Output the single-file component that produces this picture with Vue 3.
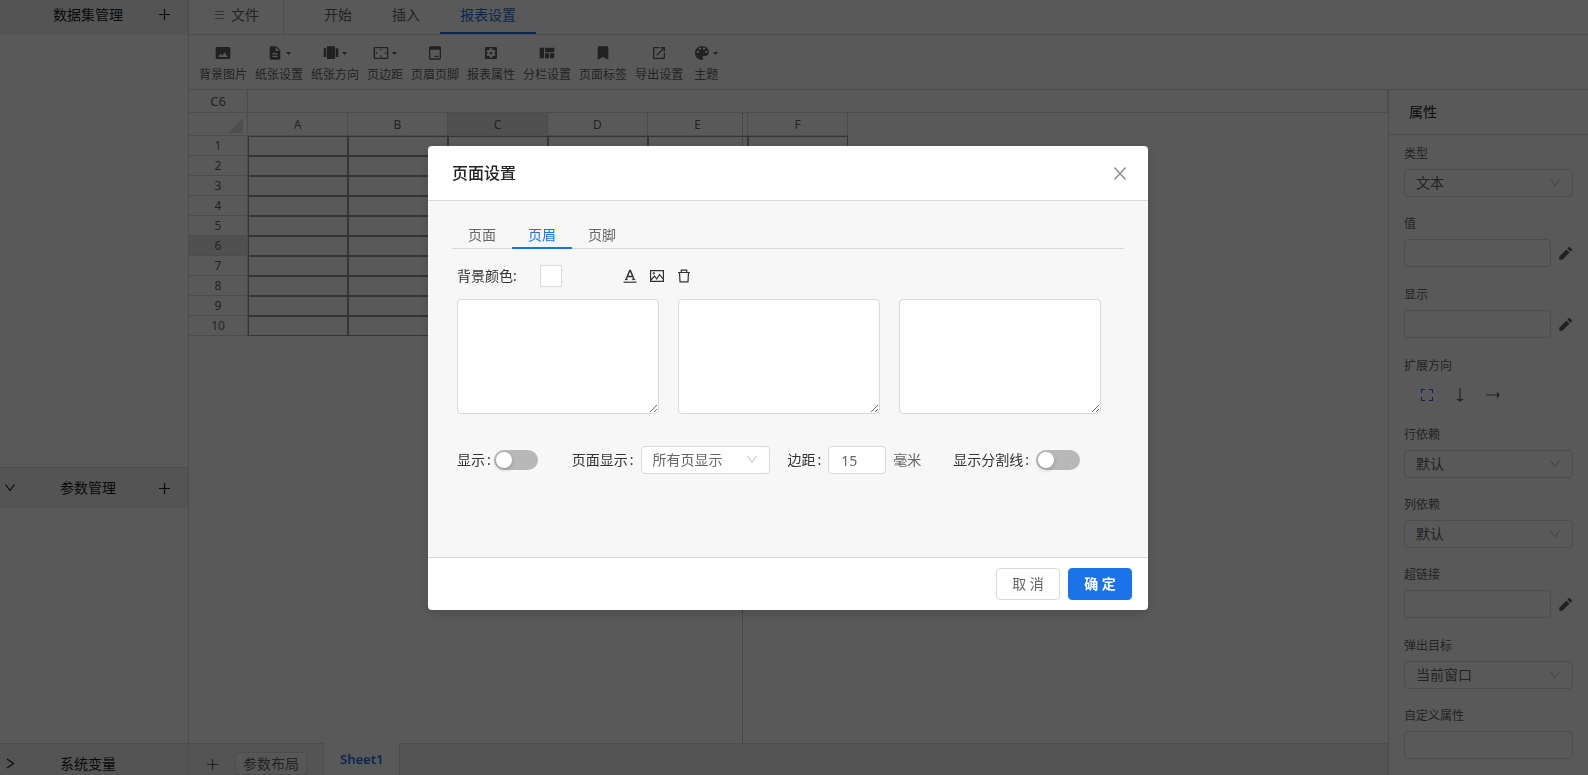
<script setup>
import { ref } from 'vue'

const menuTabs = ['开始', '插入', '报表设置']
const activeMenu = ref('报表设置')

const tools = [
  { label: '背景图片', icon: 'image' },
  { label: '纸张设置', icon: 'doc', caret: true },
  { label: '纸张方向', icon: 'carousel', caret: true },
  { label: '页边距', icon: 'margin', caret: true },
  { label: '页眉页脚', icon: 'header' },
  { label: '报表属性', icon: 'settings' },
  { label: '分栏设置', icon: 'quilt' },
  { label: '页面标签', icon: 'bookmark' },
  { label: '导出设置', icon: 'export' },
  { label: '主题', icon: 'palette', caret: true }
]

const icons = {
  image: 'M21 3H3C2 3 1 4 1 5v14c0 1.1.9 2 2 2h18c1 0 2-1 2-2V5c0-1-1-2-2-2zM5 18l3.5-5 2.5 3 3.5-5L19 18H5z',
  doc: 'M14 2H6c-1.1 0-2 .9-2 2v16c0 1.1.9 2 2 2h12c1.1 0 2-.9 2-2V8l-6-6zm2 16H8v-2h8v2zm0-4H8v-2h8v2zm-3-5V3.500L18.500 9H13z',
  carousel: 'M6 21h12V2H6v19zM1 18h4V5H1v13zM19 5v13h4V5h-4z',
  margin: 'M12 5.500L10 8h4l-2-2.500zM18 10v4l2.500-2L18 10zM6 10l-2.500 2L6 14v-4zm8 6h-4l2 2.500L14 16zm7-13H3c-1.100 0-2 .9-2 2v14c0 1.100.9 2 2 2h18c1.100 0 2-.9 2-2V5c0-1.100-.9-2-2-2zm0 16H3V5h18v14z',
  header: 'M19 2H5c-1.100 0-2 .9-2 2v16c0 1.100.9 2 2 2h14c1.100 0 2-.9 2-2V4c0-1.100-.9-2-2-2zm0 18H5V7h14v13zM11 16h6v2h-6z',
  settings: 'M12 10c-1.1 0-2 .9-2 2s.9 2 2 2 2-.9 2-2-.9-2-2-2zm7-7H5c-1.11 0-2 .9-2 2v14c0 1.1.89 2 2 2h14c1.11 0 2-.9 2-2V5c0-1.1-.89-2-2-2zm-1.75 9c0 .23-.02.46-.05.68l1.48 1.16c.13.11.17.3.08.45l-1.4 2.42c-.09.15-.27.21-.43.15l-1.74-.7c-.36.28-.76.51-1.18.69l-.26 1.85c-.03.17-.18.3-.35.3h-2.8c-.17 0-.32-.13-.35-.29l-.26-1.85c-.43-.18-.82-.41-1.18-.69l-1.74.7c-.16.06-.34 0-.43-.15l-1.4-2.42c-.09-.15-.05-.34.08-.45l1.48-1.16c-.03-.23-.05-.46-.05-.69 0-.23.02-.46.05-.68l-1.48-1.16c-.13-.11-.17-.3-.08-.45l1.4-2.42c.09-.15.27-.21.43-.15l1.74.7c.36-.28.76-.51 1.18-.69l.26-1.85c.03-.17.18-.3.35-.3h2.8c.17 0 .32.13.35.29l.26 1.85c.43.18.82.41 1.18.69l1.74-.7c.16-.06.34 0 .43.15l1.4 2.42c.09.15.05.34-.08.45l-1.48 1.16c.03.23.05.46.05.69z',
  quilt: 'M1 4h6.500v16H1zM9 4h14v7H9zM9 12.500h6.200V20H9zM16.700 12.500H23V20h-6.300z',
  bookmark: 'M18 2H6c-1.100 0-2 .9-2 2v18l8-4 8 4V4c0-1.100-.9-2-2-2z',
  export: 'M19 19H5V5h7V3H5c-1.110 0-2 .9-2 2v14c0 1.100.89 2 2 2h14c1.100 0 2-.9 2-2v-7h-2v7zM14 3v2h3.590l-9.830 9.830 1.410 1.410L19 6.410V10h2V3h-7z',
  palette: 'M12 1.500C6.200 1.500 1.500 6.200 1.500 12S6.200 22.500 12 22.500c1 0 1.750-.8 1.750-1.750 0-.450-.180-.860-.450-1.180-.270-.3-.440-.710-.440-1.150 0-.970.780-1.750 1.750-1.750h2.060c3.220 0 5.830-2.610 5.830-5.830C22.500 5.680 17.800 1.500 12 1.500zM5.600 12a1.750 1.750 0 1 1 0-3.500 1.750 1.750 0 0 1 0 3.500zm3.500-4.700a1.750 1.750 0 1 1 0-3.500 1.750 1.750 0 0 1 0 3.500zm5.800 0a1.750 1.750 0 1 1 0-3.500 1.750 1.750 0 0 1 0 3.500zm3.500 4.700a1.750 1.750 0 1 1 0-3.500 1.750 1.750 0 0 1 0 3.500z'
}

const columns = ['A', 'B', 'C', 'D', 'E', 'F']
const selected = { col: 'C', row: 6 }

const fields = [
  { id: 'type', label: '类型', kind: 'select', value: '文本' },
  { id: 'value', label: '值', kind: 'edit' },
  { id: 'display', label: '显示', kind: 'edit' },
  { id: 'expand', label: '扩展方向', kind: 'direction' },
  { id: 'rowdep', label: '行依赖', kind: 'select', value: '默认' },
  { id: 'coldep', label: '列依赖', kind: 'select', value: '默认' },
  { id: 'link', label: '超链接', kind: 'edit' },
  { id: 'target', label: '弹出目标', kind: 'select', value: '当前窗口' },
  { id: 'custom', label: '自定义属性', kind: 'text' }
]

const dialogTabs = ['页面', '页眉', '页脚']
const activeTab = ref('页眉')
const areas = ['左侧内容', '中间内容', '右侧内容']
const margin = ref('15')
const show = ref(false)
const divider = ref(false)
</script>

<template>
  <div class="app">
    <aside class="sidebar">
      <header class="group first">
        <span class="slot"></span>
        <span class="group-title">数据集管理</span>
        <button class="icon-btn add" aria-label="添加数据集">
          <svg width="13" height="13" viewBox="0 0 13 13"><path d="M6.500 1v11M1 6.500h11" /></svg>
        </button>
      </header>
      <div class="group-body grow"></div>
      <header class="group">
        <button class="icon-btn slot" aria-label="收起">
          <svg width="12" height="12" viewBox="0 0 12 12"><path d="M1.500 2.500L6 8.500l4.500-6" /></svg>
        </button>
        <span class="group-title">参数管理</span>
        <button class="icon-btn add" aria-label="添加参数">
          <svg width="13" height="13" viewBox="0 0 13 13"><path d="M6.500 1v11M1 6.500h11" /></svg>
        </button>
      </header>
      <div class="group-body params"></div>
      <header class="group last">
        <button class="icon-btn slot" aria-label="展开">
          <svg width="12" height="12" viewBox="0 0 12 12"><path d="M3 1L9.500 5.500 3 10" /></svg>
        </button>
        <span class="group-title">系统变量</span>
        <span class="add"></span>
      </header>
    </aside>

    <main class="main">
      <nav class="menu">
        <button class="file">
          <svg width="9" height="10" viewBox="0 0 9 10"><path d="M0 1.500h9M0 4.500h9M0 8.500h9" /></svg>
          文件
        </button>
        <button
          v-for="t in menuTabs"
          :key="t"
          class="menu-tab"
          :class="{ active: t === activeMenu }"
          @click="activeMenu = t"
        >{{ t }}</button>
      </nav>

      <div class="toolbar">
        <button v-for="t in tools" :key="t.label" class="tool">
          <span class="tool-icon">
            <svg width="16" height="16" viewBox="0 0 24 24"><path :d="icons[t.icon]" fill-rule="evenodd" /></svg>
            <svg v-if="t.caret" class="caret" width="5" height="3" viewBox="0 0 5 3"><path d="M0 0h5L2.500 3z" /></svg>
          </span>
          <span>{{ t.label }}</span>
        </button>
      </div>

      <div class="work">
        <section class="editor">
          <div class="formula">
            <span class="cell-ref">C6</span>
            <input class="formula-input" aria-label="公式" />
          </div>
          <div class="canvas">
            <table class="sheet">
              <thead>
                <tr>
                  <th class="corner"><svg width="15" height="15" viewBox="0 0 15 15"><path d="M15 0v15H0z" /></svg></th>
                  <th v-for="c in columns" :key="c" :class="{ on: c === selected.col }">{{ c }}</th>
                </tr>
              </thead>
              <tbody>
                <tr v-for="r in 10" :key="r">
                  <th :class="{ on: r === selected.row }">{{ r }}</th>
                  <td v-for="c in columns" :key="c"></td>
                </tr>
              </tbody>
            </table>
            <div class="page-edge"></div>
          </div>
          <footer class="sheets">
            <button class="icon-btn sheet-add" aria-label="添加工作表">
              <svg width="13" height="13" viewBox="0 0 13 13"><path d="M6.500 1v11M1 6.500h11" /></svg>
            </button>
            <button class="layout-btn">参数布局</button>
            <button class="sheet-tab">Sheet1</button>
          </footer>
        </section>

        <aside class="props">
          <h2 class="props-title">属性</h2>
          <div class="fields">
            <div v-for="f in fields" :key="f.id" class="field">
              <span v-if="f.kind === 'direction'" :id="f.id" class="caption">{{ f.label }}</span>
              <label v-else :for="f.id" class="caption">{{ f.label }}</label>
              <div v-if="f.kind === 'select'" class="select">
                <select :id="f.id"><option>{{ f.value }}</option></select>
                <svg width="12" height="12" viewBox="0 0 12 12"><path d="M1.500 2.500L6 9l4.500-6.500" /></svg>
              </div>
              <div v-else-if="f.kind === 'edit'" class="edit">
                <input :id="f.id" class="box" />
                <button class="pencil" :aria-label="'编辑' + f.label">
                  <svg width="15" height="15" viewBox="0 0 24 24"><path d="M2 17v5h5L18.500 10.500l-5-5L2 17zM22 7c.6-.6.6-1.500 0-2.100l-2.900-2.900c-.6-.6-1.500-.6-2.100 0L15 4l5 5 2-2z" /></svg>
                </button>
              </div>
              <div v-else-if="f.kind === 'direction'" class="direction" role="group" :aria-labelledby="f.id">
                <button class="icon-btn current" aria-label="不扩展">
                  <svg width="14" height="14" viewBox="0 0 14 14"><path d="M1.500 5V1.500H5M9 1.500h3.500V5M12.500 9v3.500H9M5 12.500H1.500V9" /></svg>
                </button>
                <button class="icon-btn" aria-label="纵向扩展">
                  <svg width="14" height="14" viewBox="0 0 14 14"><path d="M7 0v13M5 11.500h4L7 13z" /></svg>
                </button>
                <button class="icon-btn" aria-label="横向扩展">
                  <svg width="14" height="14" viewBox="0 0 14 14"><path d="M0 7h13M11.500 5v4L13 7z" /></svg>
                </button>
              </div>
              <input v-else :id="f.id" class="box" />
            </div>
          </div>
        </aside>
      </div>
    </main>

    <div class="mask">
      <div class="dialog" role="dialog" aria-modal="true" aria-labelledby="dialog-title">
        <header class="dialog-head">
          <h1 id="dialog-title">页面设置</h1>
          <button class="close" aria-label="关闭">
            <svg width="14" height="14" viewBox="0 0 14 14"><path d="M1.500 1.500l11 12M12.500 1.500l-11 12" /></svg>
          </button>
        </header>

        <div class="dialog-body">
          <div class="tabs" role="tablist">
            <button
              v-for="t in dialogTabs"
              :key="t"
              role="tab"
              class="tab"
              :class="{ active: t === activeTab }"
              :aria-selected="t === activeTab"
              @click="activeTab = t"
            >{{ t }}</button>
          </div>

          <div class="pane">
            <div class="tools-row">
              <label for="swatch" class="color-label">背景颜色:</label>
              <button id="swatch" class="swatch"></button>
              <div class="format">
                <button aria-label="字体">
                  <svg width="14" height="14" viewBox="0 0 14 14">
                    <path d="M.5 13.200h13" stroke-width="1.200" />
                    <path d="M3 10.500L6.800 1.500h.6L11 10.500M4.300 7.500h5.400" stroke-width="1.500" />
                    <path d="M2 10.600h2.800M8.900 10.600h3.400" stroke-width="1" />
                  </svg>
                </button>
                <button aria-label="图片">
                  <svg width="14" height="14" viewBox="0 0 14 14">
                    <path d="M.6 1.600h12.800v10.800H.6z" stroke-width="1.200" />
                    <path d="M1 11l3.500-4 2.200 3 2.800-4.500L13 10" stroke-width="1.200" />
                    <circle cx="3.800" cy="4.300" r=".8" stroke-width="1" />
                  </svg>
                </button>
                <button aria-label="删除">
                  <svg width="14" height="14" viewBox="0 0 14 14">
                    <path d="M1 3.500h12M4.300 3.500V1.200h5.400v2.300M2.500 3.500l.5 9.300h8l.5-9.300" stroke-width="1.200" />
                  </svg>
                </button>
              </div>
            </div>

            <div class="areas">
              <textarea v-for="a in areas" :key="a" :aria-label="a"></textarea>
            </div>

            <div class="options">
              <div class="option tight">
                <label for="show"><span>显示</span><span>:</span></label>
                <input id="show" v-model="show" type="checkbox" class="switch" />
              </div>
              <div class="option pages">
                <label for="pages"><span>页面显示</span><span>:</span></label>
                <div class="select">
                  <select id="pages"><option>所有页显示</option></select>
                  <svg width="12" height="12" viewBox="0 0 12 12"><path d="M1.500 2L6 8.500 10.500 2" /></svg>
                </div>
              </div>
              <div class="option distance">
                <label for="margin"><span>边距</span><span>:</span></label>
                <input id="margin" v-model="margin" class="box number" />
                <span class="unit">毫米</span>
              </div>
              <div class="option">
                <label for="divider"><span>显示分割线</span><span>:</span></label>
                <input id="divider" v-model="divider" type="checkbox" class="switch" />
              </div>
            </div>
          </div>
        </div>

        <footer class="dialog-foot">
          <button class="btn">取 消</button>
          <button class="btn primary">确 定</button>
        </footer>
      </div>
    </div>
  </div>
</template>

<style>
body {
  margin: 0;
  overflow: hidden;
}
</style>

<style scoped>
* {
  box-sizing: border-box;
}

.app {
  display: flex;
  height: 100vh;
  overflow: hidden;
  background: #fff;
  color: #666;
  font: 14px/22px "Noto Sans", "Noto Sans CJK SC", sans-serif;
}

button,
input,
select,
textarea {
  margin: 0;
  font: inherit;
  color: inherit;
}

button {
  padding: 0;
  border: 0;
  background: none;
  cursor: pointer;
}

svg {
  display: block;
  flex: none;
}

/* left sidebar */
.sidebar {
  display: flex;
  flex-direction: column;
  flex: none;
  width: 188px;
}

.group {
  display: flex;
  align-items: center;
  flex: none;
  height: 41px;
  border-top: 1px solid #d9d9d9;
  background: #f0f0f0;
  color: #222;
}

.group.first {
  height: 35px;
  padding-bottom: 6px;
  border-top: 0;
}

.group.last {
  height: 32px;
  padding-top: 9px;
}

.group-title {
  flex: 1;
  text-align: center;
}

.slot {
  width: 20px;
}

.add {
  width: 17px;
  margin-right: 15px;
}

.icon-btn {
  display: flex;
  align-items: center;
  justify-content: center;
}

.icon-btn path {
  fill: none;
  stroke: currentColor;
  stroke-width: 1.2;
}

.grow {
  flex: 1;
}

.params {
  flex: none;
  height: 235px;
}

/* menu and toolbar */
.main {
  display: flex;
  flex-direction: column;
  flex: 1;
  min-width: 0;
  border-left: 1px solid #d9d9d9;
}

.menu {
  display: flex;
  flex: none;
  height: 35px;
  border-bottom: 1px solid #d9d9d9;
}

.file {
  display: flex;
  align-items: center;
  gap: 7px;
  margin-right: 20px;
  padding: 0 24px 4px 26px;
  border-right: 1px solid #d9d9d9;
}

.file path {
  stroke: #999;
}

.menu-tab {
  height: 34px;
  padding: 0 20px 4px;
}

.menu-tab.active {
  box-shadow: inset 0 -2px #1a73e8;
  color: #1a73e8;
}

.toolbar {
  display: flex;
  gap: 8px;
  flex: none;
  height: 55px;
  padding: 9px 10px 0;
  border-bottom: 1px solid #d9d9d9;
  font-size: 12px;
  line-height: 20px;
}

.tool {
  display: flex;
  flex-direction: column;
  align-items: center;
  gap: 3px;
  min-width: 30px;
}

.tool-icon {
  display: flex;
  align-items: center;
  gap: 3px;
  height: 18px;
  fill: #606060;
}

/* spreadsheet */
.work {
  display: flex;
  flex: 1;
  min-height: 0;
}

.editor {
  display: flex;
  flex-direction: column;
  flex: 1;
  min-width: 0;
}

.formula {
  display: flex;
  flex: none;
  height: 23px;
  border-bottom: 1px solid #d9d9d9;
}

.cell-ref {
  width: 59px;
  border-right: 1px solid #d9d9d9;
  font-size: 13px;
  text-align: center;
}

.formula-input {
  flex: 1;
  border: 0;
  border-right: 1px solid #d9d9d9;
  background: none;
}

.canvas {
  position: relative;
  flex: 1;
  min-height: 0;
}

.sheet {
  width: 659px;
  border-spacing: 0;
  table-layout: fixed;
  font-size: 12px;
  line-height: 18px;
}

.sheet th {
  height: 20px;
  padding: 0;
  border: 0 solid #d9d9d9;
  border-width: 0 1px 1px 0;
  font-weight: 400;
}

.sheet thead th {
  height: 23px;
  padding-top: 2px;
}

.sheet .corner {
  width: 59px;
}

.corner svg {
  margin-left: 39px;
  fill: #e0e0e0;
}

.sheet .on {
  background: #e4e4e4;
}

.sheet td {
  padding: 0;
  border: 1px solid #999;
}

.page-edge {
  position: absolute;
  top: 0;
  bottom: 0;
  left: 553px;
  border-left: 1px dotted #999;
}

.sheets {
  display: flex;
  flex: none;
  height: 32px;
  border-top: 1px solid #d9d9d9;
  background: #f0f0f0;
}

.sheet-add {
  width: 46px;
  padding-top: 9px;
}

.layout-btn {
  margin-top: 8px;
  padding: 0 7px;
  border: 1px solid #d9d9d9;
  border-radius: 4px 4px 0 0;
  background: #fafafa;
}

.sheet-tab {
  margin: -1px 0 0 16px;
  padding: 0 16px;
  border: 0 solid #d9d9d9;
  border-width: 0 1px;
  background: #fff;
  color: #1a73e8;
  font-size: 13px;
  font-weight: 600;
}

/* property panel */
.props {
  flex: none;
  width: 200px;
  border-left: 1px solid #d9d9d9;
}

.props-title {
  margin: 0;
  padding: 11px 20px;
  border-bottom: 1px solid #d9d9d9;
  color: #222;
  font-size: 14px;
  font-weight: 400;
}

.fields {
  display: grid;
  gap: 16px;
  padding: 8px 15px;
}

.caption {
  display: block;
  height: 26px;
  font-size: 12px;
}

.box,
.select select {
  display: block;
  width: 100%;
  height: 28px;
  padding: 0 11px;
  border: 1px solid #d9d9d9;
  border-radius: 4px;
  outline: 0;
  background: #fff;
}

.select {
  position: relative;
}

.select select {
  appearance: none;
}

.select svg {
  position: absolute;
  top: 8px;
  right: 12px;
  fill: none;
  stroke: #bfbfbf;
  pointer-events: none;
}

.edit {
  display: flex;
  align-items: flex-start;
  gap: 7px;
  height: 29px;
}

.edit .box {
  flex: 1;
  min-width: 0;
}

.pencil {
  display: flex;
  align-items: center;
  height: 28px;
  fill: #606060;
}

.direction {
  display: flex;
  gap: 19px;
  height: 27px;
  padding-left: 16px;
}

.direction .current {
  color: #1a73e8;
}

/* dialog */
.mask {
  position: fixed;
  inset: 0;
  display: flex;
  align-items: flex-start;
  justify-content: center;
  padding: 146px 12px 0 0;
  background: rgba(0, 0, 0, 0.65);
}

.dialog {
  width: 720px;
  overflow: hidden;
  border-radius: 4px;
  background: #fff;
  box-shadow: 0 4px 12px rgba(0, 0, 0, 0.15);
}

.dialog-head {
  display: flex;
  align-items: center;
  justify-content: space-between;
  padding: 16px 20px 16px 24px;
  border-bottom: 1px solid #d9d9d9;
}

.dialog-head h1 {
  margin: 0;
  color: #222;
  font-size: 16px;
  font-weight: 500;
  line-height: 22px;
}

.close {
  padding: 0 1px;
}

.close path {
  stroke: #8c8c8c;
  stroke-width: 1.4;
}

.dialog-body {
  min-height: 356px;
  padding: 20px 24px;
  background: #f7f7f7;
}

.tabs {
  display: flex;
  box-shadow: inset 0 -1px #d9d9d9;
}

.tab {
  padding: 0 16px;
  line-height: 28px;
}

.tab.active {
  box-shadow: inset 0 -2px #1a73e8;
  color: #1a73e8;
}

.pane {
  padding: 16px 23px 0 5px;
  color: #333;
}

.tools-row {
  display: flex;
  align-items: center;
}

.color-label {
  width: 83px;
}

.swatch {
  width: 22px;
  height: 22px;
  border: 1px solid #d9d9d9;
  background: #fff;
}

.format {
  display: flex;
  gap: 13px;
  margin-left: 61px;
}

.format svg {
  fill: none;
  stroke: #333;
}

.areas {
  display: grid;
  grid-template-columns: repeat(3, 1fr);
  gap: 19px;
  margin: 12px 0 32px;
}

.areas textarea {
  display: block;
  width: 100%;
  height: 115px;
  padding: 4px 11px;
  border: 1px solid #d9d9d9;
  border-radius: 4px;
  outline: 0;
  background: #fff;
  resize: vertical;
}

.options {
  display: flex;
  align-items: center;
}

.option {
  display: flex;
  align-items: center;
  gap: 7px;
}

.option label {
  display: flex;
  gap: 2px;
  white-space: nowrap;
}

.option.tight {
  gap: 3px;
}

.pages {
  margin: 0 18px 0 34px;
}

.pages .select {
  width: 129px;
  color: #666;
}

.distance {
  margin-right: 32px;
}

.number {
  width: 58px;
  padding: 0 12px;
  color: #666;
}

.unit {
  color: #666;
}

.switch {
  appearance: none;
  display: flex;
  width: 44px;
  height: 20px;
  padding: 2px;
  border-radius: 10px;
  background: #b8b8b8;
  cursor: pointer;
}

.switch::before {
  content: "";
  width: 16px;
  height: 16px;
  border-radius: 8px;
  background: #fff;
  box-shadow: 0 2px 4px rgba(0, 35, 11, 0.2);
}

.switch:checked {
  justify-content: flex-end;
  background: #1a73e8;
}

.dialog-foot {
  display: flex;
  justify-content: flex-end;
  gap: 8px;
  padding: 10px 16px;
  border-top: 1px solid #d9d9d9;
}

.btn {
  width: 64px;
  height: 32px;
  border: 1px solid #d9d9d9;
  border-radius: 4px;
  background: #fff;
}

.btn.primary {
  border-color: #1a73e8;
  background: #1a73e8;
  color: #fff;
  font-weight: 700;
}
</style>
